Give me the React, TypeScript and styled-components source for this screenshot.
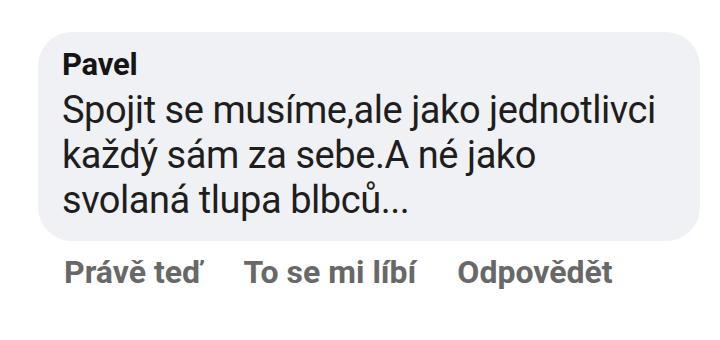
import styled, { createGlobalStyle } from 'styled-components';

const Global = createGlobalStyle`
  html, body {
    margin: 0;
    padding: 0;
    background: #ffffff;
  }
  body {
    width: 720px;
    height: 340px;
    overflow: hidden;
    font-family: Roboto, "Noto Sans", "Liberation Sans", sans-serif;
    -webkit-font-smoothing: antialiased;
  }
`;

const Page = styled.div`
  padding: 32px 18px 0 38px;
`;

const Bubble = styled.div`
  width: 662px;
  box-sizing: border-box;
  padding: 14px 20px 18px 24px;
  border-radius: 34px;
  background: #f0f1f4;
`;

const Author = styled.div`
  font-size: 31px;
  font-weight: 700;
  line-height: 38px;
  letter-spacing: -0.2px;
  color: #151515;
`;

const Body = styled.div`
  margin-top: 4px;
  font-size: 38px;
  font-weight: 400;
  line-height: 45px;
  letter-spacing: -0.45px;
  color: #1e1e1e;
`;

const Actions = styled.div`
  display: flex;
  gap: 41px;
  padding: 12px 0 0 26px;
`;

const Action = styled.span`
  font-size: 32px;
  font-weight: 700;
  line-height: 38px;
  color: #686868;
`;

export default function App() {
  return (
    <>
      <Global />
      <Page>
        <Bubble>
          <Author>Pavel</Author>
          <Body>
            Spojit se musíme,ale jako jednotlivci
            <br />
            každý sám za sebe.A né jako
            <br />
            svolaná tlupa blbců...
          </Body>
        </Bubble>
        <Actions>
          <Action>Právě teď</Action>
          <Action>To se mi líbí</Action>
          <Action>Odpovědět</Action>
        </Actions>
      </Page>
    </>
  );
}
